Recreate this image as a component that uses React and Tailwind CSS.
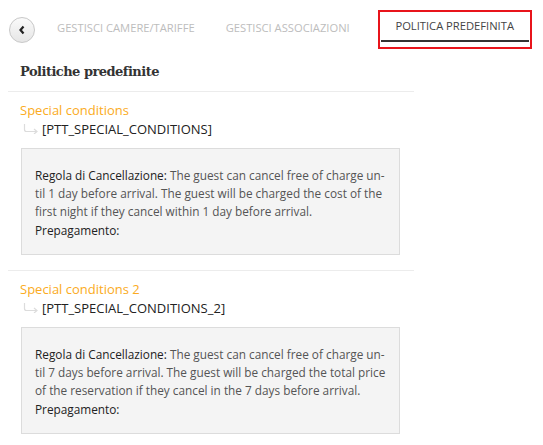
const policies = [
  {
    name: "Special conditions",
    code: "[PTT_SPECIAL_CONDITIONS]",
    text: (
      <>
        The guest can cancel free of charge un&shy;til 1 day before arrival. The guest will be charged the cost of the first night if they cancel within 1 day before arrival.
      </>
    ),
  },
  {
    name: "Special conditions 2",
    code: "[PTT_SPECIAL_CONDITIONS_2]",
    text: (
      <>
        The guest can cancel free of charge un&shy;til 7 days before arrival. The guest will be charged the total price of the reservation if they cancel in the 7 days before arrival.
      </>
    ),
  },
];

function CornerArrow() {
  return (
    <svg width="16" height="10" viewBox="0 0 16 10" className="shrink-0 text-[#dcdcdc]" aria-hidden="true">
      <path d="M1.5 0v5.5a2 2 0 0 0 2 2h10" fill="none" stroke="currentColor" strokeWidth="1.2" />
      <path d="M11 5l3 2.5-3 2.5" fill="none" stroke="currentColor" strokeWidth="1.2" />
    </svg>
  );
}

export default function App() {
  return (
    <div className="min-h-[445px] w-[543px] bg-white font-['Open_Sans',sans-serif] text-[#333]">
      {/* Tabs */}
      <div className="flex h-[50px] items-start whitespace-nowrap pt-[10px]">
        <div className="flex h-[39px] w-[57px] items-center pl-[9px]">
          <button
            type="button"
            className="flex h-[26px] w-[26px] items-center justify-center rounded-full border border-[#c8c8c8] bg-gradient-to-b from-[#fafafa] to-[#e6e6e6]"
          >
            <svg width="8" height="10" viewBox="0 0 8 10" aria-hidden="true">
              <path d="M5.5 1.5L2.5 5l3 3.5" fill="none" stroke="#222" strokeWidth="2.2" />
            </svg>
          </button>
        </div>
        <div className="flex h-[39px] items-center pb-[3px] text-[11.2px] uppercase text-[#bdbdbd]">
          Gestisci camere/tariffe
        </div>
        <div className="ml-[31px] flex h-[39px] items-center pb-[3px] text-[11.2px] uppercase text-[#bdbdbd]">
          Gestisci associazioni
        </div>
        <div className="ml-[28px] h-[39px] w-[154px] border-2 border-[#e8141b] px-[1px]">
          <div className="flex h-[30px] items-center justify-center border-b-2 border-[#333] pt-[1px] text-[11.2px] uppercase text-[#444]">
            Politica predefinita
          </div>
        </div>
      </div>

      {/* Content */}
      <div className="w-[414px] pl-[8px]">
        <h2 className="flex h-[42px] items-center border-b border-[#ececec] pl-[12px] pt-[2px] font-['DejaVu_Serif',serif] text-[13px] font-bold tracking-[-0.04em] text-[#333]">
          Politiche predefinite
        </h2>
        {policies.map((p, i) => (
          <div
            key={p.code}
            className={i === 0 ? "border-b border-[#ececec] pb-[15px] pl-[12px]" : "pl-[12px]"}
          >
            <div className="pt-[9px] text-[13px] leading-[18px] text-[#fbab22]">{p.name}</div>
            <div className="mt-[1px] flex items-center gap-[3px] pl-[3px] text-[13px] leading-[18px] text-[#222]">
              <CornerArrow />
              <span>{p.code}</span>
            </div>
            <div className="ml-[1px] mt-[10px] w-[379px] border border-[#dcdcdc] bg-[#f4f4f4] pb-[15px] pl-[13px] pr-[10px] pt-[17px] text-[11.8px] leading-[18px] text-[#555]">
              <p>
                <span className="text-[#222]">Regola di Cancellazione:</span> {p.text}
              </p>
              <p className="mt-[1px] text-[#222]">Prepagamento:</p>
            </div>
          </div>
        ))}
      </div>
    </div>
  );
}
